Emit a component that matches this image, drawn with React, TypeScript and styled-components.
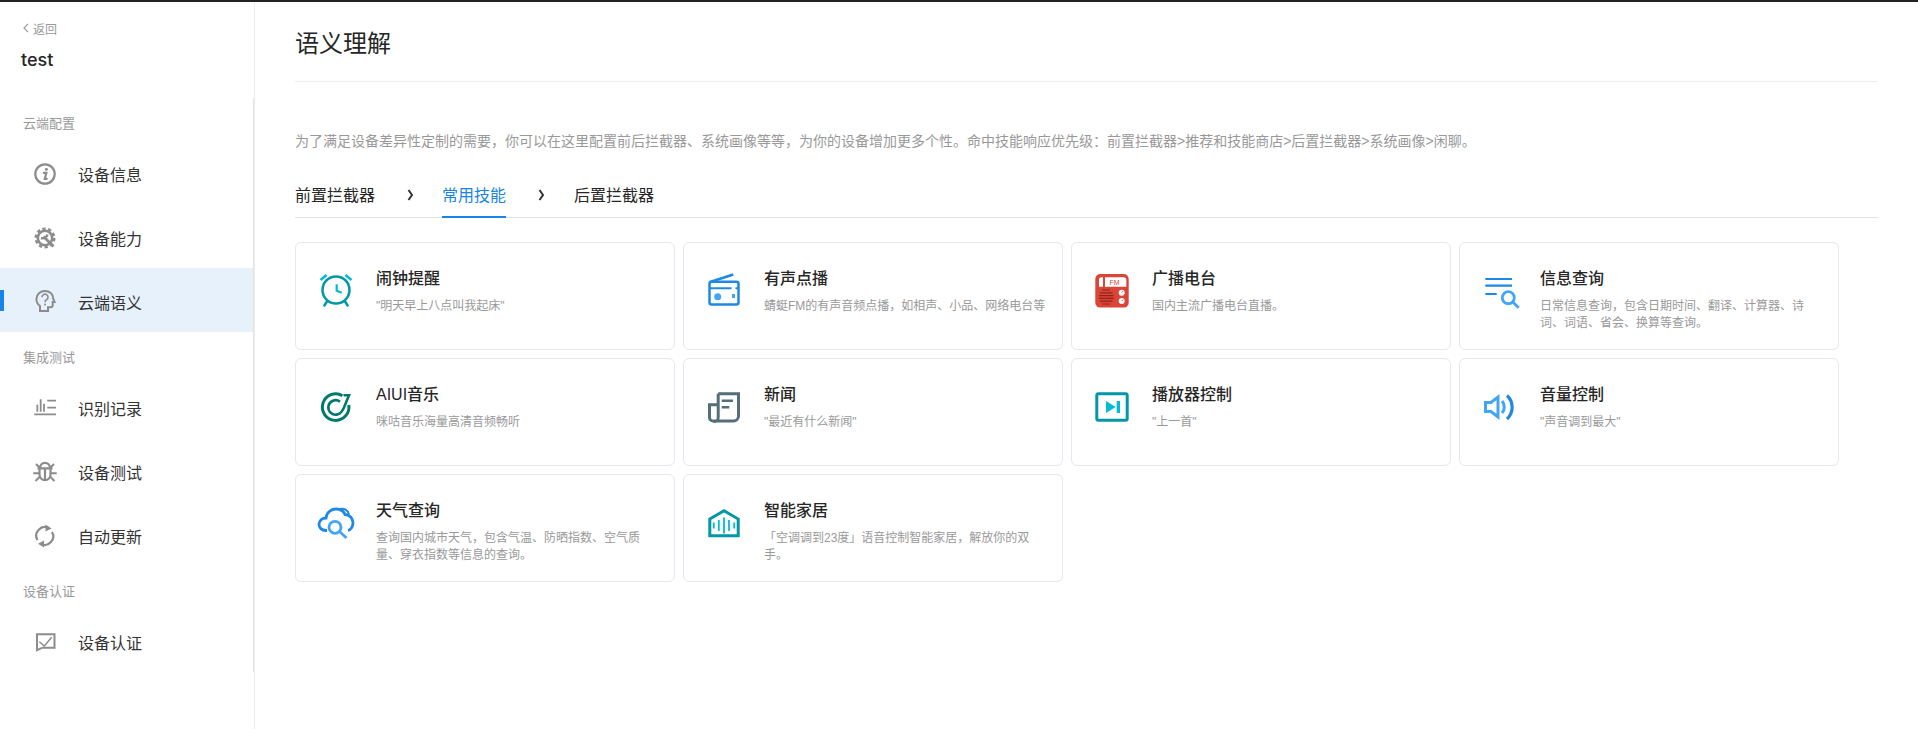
import React from 'react';
import styled, { createGlobalStyle } from 'styled-components';

const GlobalStyle = createGlobalStyle`
  html, body {
    margin: 0;
    padding: 0;
    background: #fff;
    font-family: "Liberation Sans", "Noto Sans CJK SC", sans-serif;
  }
  * { box-sizing: border-box; }
`;

const GREY = '#8c8c8c';
const BLUE = '#1e88e5';
const LIGHT_BLUE = '#42a5f5';
const TEAL = '#0097a7';
const CYAN = '#00bcd4';

const InfoIcon = () => (
  <NavSvg viewBox="0 0 32 32">
    <circle cx="16" cy="18" r="9.7" fill="none" stroke={GREY} strokeWidth="2.200" />
    <path d="M14.800 16.800h2.600l-1.600 6h2" fill="none" stroke={GREY} strokeWidth="2.200" strokeLinecap="round" />
    <circle cx="17.400" cy="13.200" r="1.500" fill={GREY} />
  </NavSvg>
);

const GearIcon = () => (
  <NavSvg viewBox="0 0 32 32">
    <circle cx="16" cy="18" r="7.200" fill="none" stroke={GREY} strokeWidth="2.600" />
    <circle cx="16" cy="18" r="9.300" fill="none" stroke={GREY} strokeWidth="2.400" strokeDasharray="3.300 2.540" />
    <path d="M14.500 16.500l10 10" stroke={GREY} strokeWidth="2.800" />
    <path d="M18.500 14.500a5 5 0 0 1-6.500 3.500" fill="none" stroke={GREY} strokeWidth="2.600" />
  </NavSvg>
);

const HeadIcon = () => (
  <NavSvg viewBox="0 0 32 32">
    <path
      d="M11 27v-5c-2.600-1.800-3.600-4.500-3.600-7C7.400 10.200 11.400 7 16 7c4.500 0 8.100 3 8.100 7.300l1.500 3.700h-1.900v3c0 1.400-1 2.300-2.300 2.300H19V27z"
      fill="none"
      stroke={GREY}
      strokeWidth="2"
    />
    <path d="M13 13.200a3 3 0 1 1 4.500 2.600c-1 .6-1.500 1.200-1.500 2.400" fill="none" stroke={GREY} strokeWidth="1.600" />
    <circle cx="16" cy="20.400" r="1" fill={GREY} />
  </NavSvg>
);

const RecordIcon = () => (
  <NavSvg viewBox="0 0 32 32">
    <path
      d="M5.300 24.300H27M8.300 14.800v6.900M11.700 9.300v12.400M15 13.800v7.900M18.300 10.700H27M18.300 17.700H27"
      fill="none"
      stroke={GREY}
      strokeWidth="1.800"
    />
  </NavSvg>
);

const BugIcon = () => (
  <NavSvg viewBox="0 0 32 32">
    <path
      d="M8.500 14.300h15M11 14.300c0-3.400 2.200-5.400 5-5.400s5 2 5 5.400M10.500 14.300v6c0 3.400 2.500 5.800 5.500 5.800s5.500-2.400 5.500-5.800v-6M16 14.300v12"
      fill="none"
      stroke={GREY}
      strokeWidth="2.200"
    />
    <path
      d="M10.500 13.500L7 10M21.500 13.500L25 10M4.300 19.300h6.200M21.500 19.300h6.200M10.500 23l-4 4M21.500 23l4 4"
      fill="none"
      stroke={GREY}
      strokeWidth="2"
    />
  </NavSvg>
);

const RefreshIcon = () => (
  <NavSvg viewBox="0 0 32 32">
    <path d="M8.500 22A8.500 8.500 0 0 1 19.500 10" fill="none" stroke={GREY} strokeWidth="2.200" />
    <path d="M23 14A8.500 8.500 0 0 1 12 26" fill="none" stroke={GREY} strokeWidth="2.200" />
    <path d="M16.500 6.500l6 3.900-6 3zM15 22.500l-6 3.300 6 3.700z" fill={GREY} />
  </NavSvg>
);

const MessageIcon = () => (
  <NavSvg viewBox="0 0 32 32">
    <path d="M8 10.300h17.500v13.400H13.500L8 26.200z" fill="none" stroke={GREY} strokeWidth="2" />
    <path d="M10.300 17.700l5 4.300 7.400-8.700" fill="none" stroke={GREY} strokeWidth="1.500" />
  </NavSvg>
);

const ClockIcon = () => (
  <CardSvg viewBox="0 0 40 40">
    <circle cx="20" cy="21" r="13.500" fill="none" stroke={TEAL} strokeWidth="2.500" />
    <path d="M4.500 11l6-5M35.500 11l-6-5" stroke={CYAN} strokeWidth="2.500" />
    <path d="M20.700 15.300v6.500l5 2" fill="none" stroke={CYAN} strokeWidth="2.200" />
    <path d="M11 32.500l-2.600 4M29 32.500l2.600 4" stroke={TEAL} strokeWidth="2.500" strokeLinecap="round" />
  </CardSvg>
);

const RadioIcon = () => (
  <CardSvg viewBox="0 0 40 40">
    <rect x="5.500" y="12.800" width="29" height="22.700" rx="2" fill="none" stroke={BLUE} strokeWidth="2.500" />
    <path d="M6 13l23.300-7.500" stroke={BLUE} strokeWidth="2.500" />
    <path d="M5.500 19.300h22M31.500 19.300h3" stroke={BLUE} strokeWidth="2" />
    <circle cx="13.700" cy="27.700" r="3.500" fill={LIGHT_BLUE} />
    <rect x="28" y="25" width="3" height="4" fill={LIGHT_BLUE} />
  </CardSvg>
);

const FmIcon = () => (
  <CardSvg viewBox="0 0 40 40">
    <rect x="3.300" y="5" width="33.400" height="33.600" rx="5" fill="#db4437" />
    <path d="M7 17.700v-7a2.500 2.500 0 0 1 2.500-2.500H11v9.500zM13 8.200h18.800a2.500 2.500 0 0 1 2.500 2.500v7H13z" fill="#fff" />
    <FmLabel x="17.500" y="15.600">
      FM
    </FmLabel>
    <path
      d="M10 21h8M8 23.800h12.500M7 26.600h14.700M7 29.400h14.700M8 32.200h12.500M10 35h8"
      stroke="#8e2418"
      strokeWidth="1.200"
    />
    <circle cx="29.700" cy="23.700" r="3" fill="#fff" />
    <circle cx="29.700" cy="32" r="3" fill="#fff" />
    <path d="M29.700 23.700l1.500-1.500M29.700 32l1.500-1.500" stroke="#db4437" strokeWidth="1" />
  </CardSvg>
);

const QueryIcon = () => (
  <CardSvg viewBox="0 0 40 40">
    <path d="M5.300 10H32M5.300 16.700H32M5.300 25h11.400" stroke={BLUE} strokeWidth="2.200" />
    <circle cx="28.300" cy="28.700" r="6" fill="none" stroke={LIGHT_BLUE} strokeWidth="2.800" />
    <path d="M32.700 33l6 5.800" stroke={LIGHT_BLUE} strokeWidth="2.800" />
  </CardSvg>
);

const MusicIcon = () => (
  <CardSvg viewBox="0 0 40 40">
    <path d="M26.500 10.700A13.300 13.300 0 1 0 32.800 20" fill="none" stroke="#00796b" strokeWidth="3" />
    <path
      d="M24 16.800A7.200 7.200 0 1 0 22 29.200C26 28.300 27.500 24 29 20L33 10.300H27.500"
      fill="none"
      stroke="#00796b"
      strokeWidth="2.600"
    />
  </CardSvg>
);

const NewsIcon = () => (
  <CardSvg viewBox="0 0 40 40">
    <path
      d="M14.200 8.800h20.300V31a5 5 0 0 1-5 5H9a3.500 3.500 0 0 1-3.500-3.500V19.700h8.700M14.200 8.800v23.700A3.500 3.500 0 0 1 9 36"
      fill="none"
      stroke="#546e7a"
      strokeWidth="3"
    />
    <path d="M17.700 15.700H29M17.700 22.300h7.600" stroke="#546e7a" strokeWidth="2.600" />
  </CardSvg>
);

const PlayerIcon = () => (
  <CardSvg viewBox="0 0 40 40">
    <rect x="4.800" y="8.800" width="30.400" height="26.400" rx="1.500" fill="none" stroke={TEAL} strokeWidth="3" />
    <path d="M14 16v12l9.700-6z" fill={CYAN} />
    <rect x="24.700" y="16" width="3.300" height="12" fill={CYAN} />
  </CardSvg>
);

const VolumeIcon = () => (
  <CardSvg viewBox="0 0 40 40">
    <path d="M5.500 17.500h5.500l7-5.500v20l-7-5.500H5.500z" fill="none" stroke={LIGHT_BLUE} strokeWidth="3" />
    <path d="M22 16a9 9 0 0 1 0 12" fill="none" stroke={LIGHT_BLUE} strokeWidth="3" />
    <path d="M27 10.500a16 16 0 0 1 0 23.500" fill="none" stroke={BLUE} strokeWidth="3.200" />
  </CardSvg>
);

const CloudIcon = () => (
  <CardSvg viewBox="0 0 40 40">
    <path
      d="M11 29.500H10C5.500 29.500 3 26.500 3 23.500c0-3.800 3.300-6.500 7-6.500.5-5.500 5-9 10-9 4.500 0 7.800 2.500 9 5.500 4.500 0 8 4 8 8.500 0 3.800-2.500 7-5 7.500"
      fill="none"
      stroke={BLUE}
      strokeWidth="2.800"
    />
    <path d="M24 8c4-1 8 1 9 5.500" fill="none" stroke={BLUE} strokeWidth="2" />
    <circle cx="19" cy="26.300" r="6" fill="none" stroke={LIGHT_BLUE} strokeWidth="2.800" />
    <path d="M23.500 30.500l7 6.500" stroke={LIGHT_BLUE} strokeWidth="2.800" />
  </CardSvg>
);

const HomeIcon = () => (
  <CardSvg viewBox="0 0 40 40">
    <path d="M5.800 18L20 9.800 34.200 18v16.800H5.800z" fill="none" stroke={TEAL} strokeWidth="3" />
    <path d="M9.800 21.500v6M14.800 19v11M20 16.500v16M25 19v11M30.200 21.500v6" stroke={CYAN} strokeWidth="1.800" />
  </CardSvg>
);

const groups = [
  {
    title: '云端配置',
    items: [
      { name: '设备信息', icon: <InfoIcon /> },
      { name: '设备能力', icon: <GearIcon /> },
      { name: '云端语义', icon: <HeadIcon />, active: true },
    ],
  },
  {
    title: '集成测试',
    items: [
      { name: '识别记录', icon: <RecordIcon /> },
      { name: '设备测试', icon: <BugIcon /> },
      { name: '自动更新', icon: <RefreshIcon /> },
    ],
  },
  {
    title: '设备认证',
    items: [{ name: '设备认证', icon: <MessageIcon /> }],
  },
];

const skills = [
  { name: '闹钟提醒', desc: '"明天早上八点叫我起床"', icon: <ClockIcon /> },
  { name: '有声点播', desc: '蜻蜓FM的有声音频点播，如相声、小品、网络电台等', icon: <RadioIcon /> },
  { name: '广播电台', desc: '国内主流广播电台直播。', icon: <FmIcon /> },
  { name: '信息查询', desc: '日常信息查询，包含日期时间、翻译、计算器、诗词、词语、省会、换算等查询。', icon: <QueryIcon /> },
  { name: 'AIUI音乐', desc: '咪咕音乐海量高清音频畅听', icon: <MusicIcon /> },
  { name: '新闻', desc: '"最近有什么新闻"', icon: <NewsIcon /> },
  { name: '播放器控制', desc: '"上一首"', icon: <PlayerIcon /> },
  { name: '音量控制', desc: '"声音调到最大"', icon: <VolumeIcon /> },
  { name: '天气查询', desc: '查询国内城市天气，包含气温、防晒指数、空气质量、穿衣指数等信息的查询。', icon: <CloudIcon /> },
  { name: '智能家居', desc: '「空调调到23度」语音控制智能家居，解放你的双手。', icon: <HomeIcon /> },
];

const Chevron = () => (
  <ChevronSvg viewBox="0 0 7 12">
    <path d="M1.500 1l3.500 5-3.500 5" fill="none" stroke="#333" strokeWidth="2" />
  </ChevronSvg>
);

export default function App() {
  return (
    <Page>
      <GlobalStyle />
      <TopBar />
      <Body>
        <Sidebar>
          <SideHead>
            <BackLink>
              <svg width="8" height="10" viewBox="0 0 8 10">
                <path d="M6 .8L2 5l4 4.200" fill="none" stroke="#999" strokeWidth="1.200" />
              </svg>
              返回
            </BackLink>
            <ProjectName>test</ProjectName>
          </SideHead>
          <Nav>
            {groups.map((group) => (
              <div key={group.title}>
                <GroupLabel>{group.title}</GroupLabel>
                {group.items.map((item) => (
                  <NavItem key={item.name} $active={item.active}>
                    {item.icon}
                    <span>{item.name}</span>
                  </NavItem>
                ))}
              </div>
            ))}
          </Nav>
        </Sidebar>
        <Main>
          <TitleBar>语义理解</TitleBar>
          <Description>
            为了满足设备差异性定制的需要，你可以在这里配置前后拦截器、系统画像等等，为你的设备增加更多个性。命中技能响应优先级：前置拦截器&gt;推荐和技能商店&gt;后置拦截器&gt;系统画像&gt;闲聊。
          </Description>
          <Tabs>
            <Tab>前置拦截器</Tab>
            <Chevron />
            <Tab $active>常用技能</Tab>
            <Chevron />
            <Tab>后置拦截器</Tab>
          </Tabs>
          <CardGrid>
            {skills.map((skill) => (
              <Card key={skill.name}>
                {skill.icon}
                <CardText>
                  <CardTitle>{skill.name}</CardTitle>
                  <CardDesc>{skill.desc}</CardDesc>
                </CardText>
              </Card>
            ))}
          </CardGrid>
        </Main>
      </Body>
    </Page>
  );
}

const Page = styled.div`
  display: flex;
  flex-direction: column;
  height: 100vh;
  overflow: hidden;
`;
const TopBar = styled.div`
  height: 2px;
  flex: none;
  background: #222;
`;
const Body = styled.div`
  display: flex;
  flex: 1;
  min-height: 0;
`;
const Sidebar = styled.aside`
  flex: none;
  width: 255px;
  border-right: 1px solid #ececec;
`;
const SideHead = styled.div`
  height: 96px;
  padding: 17px 0 0 21px;
`;
const BackLink = styled.div`
  display: flex;
  align-items: center;
  gap: 3px;
  padding-left: 1px;
  height: 18px;
  font-size: 12px;
  color: #999;
`;
const ProjectName = styled.div`
  margin-top: 10px;
  font-family: "Inter", "Liberation Sans", sans-serif;
  font-size: 18px;
  line-height: 26px;
  font-weight: 500;
  color: #262626;
`;
const Nav = styled.nav`
  height: 574px;
  width: 254px;
  border-right: 1px solid #e4e4e4;
`;
const GroupLabel = styled.div`
  height: 42px;
  padding: 16px 0 0 23px;
  font-size: 13px;
  line-height: 20px;
  color: #999;
`;
const NavItem = styled.div<{ $active?: boolean }>`
  position: relative;
  display: flex;
  align-items: center;
  gap: 17px;
  height: 64px;
  padding: 0 0 0 29px;
  font-size: 16px;
  color: #333;
  background: ${(p) => (p.$active ? '#e6f1fb' : 'transparent')};
  &::before {
    content: '';
    display: ${(p) => (p.$active ? 'block' : 'none')};
    position: absolute;
    left: 0;
    top: 22px;
    width: 4px;
    height: 21px;
    background: #1784e9;
  }
  & > span {
    padding-top: 4px;
  }
`;
const NavSvg = styled.svg`
  flex: none;
  width: 32px;
  height: 32px;
  overflow: visible;
`;
const Main = styled.main`
  flex: 1;
  min-width: 0;
  padding: 0 40px;
`;
const TitleBar = styled.h1`
  margin: 0;
  height: 80px;
  padding-top: 25px;
  border-bottom: 1px solid #ececec;
  font-size: 24px;
  line-height: 34px;
  font-weight: 400;
  color: #262626;
`;
const Description = styled.p`
  margin: 49px 0 0;
  font-size: 14px;
  line-height: 20px;
  color: #999;
  white-space: nowrap;
`;
const Tabs = styled.div`
  display: flex;
  align-items: center;
  gap: 30px;
  height: 40px;
  margin-top: 27px;
  border-bottom: 1px solid #e4e4e4;
`;
const Tab = styled.div<{ $active?: boolean }>`
  display: flex;
  align-items: center;
  height: 39px;
  padding-bottom: 6px;
  font-size: 16px;
  color: ${(p) => (p.$active ? '#1784e9' : '#262626')};
  border-bottom: 2px solid ${(p) => (p.$active ? '#1784e9' : 'transparent')};
  margin-bottom: -1px;
  &:last-child {
    margin-left: 1px;
  }
`;
const ChevronSvg = styled.svg`
  flex: none;
  width: 7px;
  height: 12px;
  margin: 0 -2px 6px 2px;
`;
const CardGrid = styled.div`
  display: grid;
  grid-template-columns: repeat(4, 380px);
  grid-auto-rows: 108px;
  gap: 8px;
  margin-top: 24px;
`;
const Card = styled.div`
  display: flex;
  align-items: flex-start;
  gap: 20px;
  padding: 24px 0 0 20px;
  border: 1px solid #e6e7ef;
  border-radius: 6px;
  background: #fff;
`;
const CardSvg = styled.svg`
  flex: none;
  width: 40px;
  height: 40px;
  margin-top: 2px;
  overflow: visible;
`;
const FmLabel = styled.text`
  font-size: 7px;
  fill: #db4437;
`;
const CardText = styled.div`
  width: 284px;
`;
const CardTitle = styled.div`
  font-size: 16px;
  line-height: 24px;
  font-weight: 500;
  color: #262626;
`;
const CardDesc = styled.div`
  margin-top: 7px;
  font-size: 12px;
  line-height: 17px;
  color: #999;
`;
